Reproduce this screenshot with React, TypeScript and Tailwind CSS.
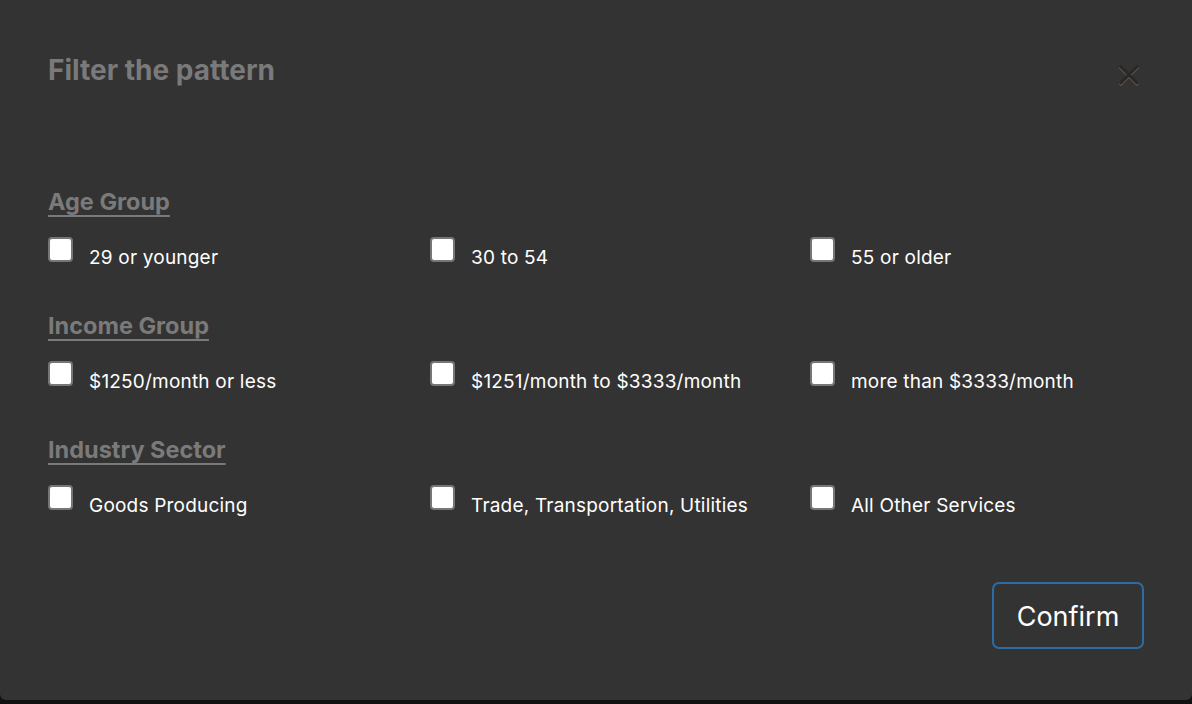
import React from "react";

const groups = [
  { title: "Age Group", items: ["29 or younger", "30 to 54", "55 or older"] },
  {
    title: "Income Group",
    items: ["$1250/month or less", "$1251/month to $3333/month", "more than $3333/month"],
  },
  {
    title: "Industry Sector",
    items: ["Goods Producing", "Trade, Transportation, Utilities", "All Other Services"],
  },
];

function Box() {
  return (
    <span className="mt-[1px] h-[25px] w-[25px] shrink-0 rounded-[4px] border-2 border-[#767676] bg-white" />
  );
}

export default function App() {
  return (
    <div
      className="flex h-[704px] w-[1192px] flex-col bg-[#111]"
      style={{ fontFamily: "Inter, 'Noto Sans', sans-serif" }}
    >
      <div className="flex h-[700px] flex-col rounded-b-[6px] bg-[#333333]">
        <div className="flex items-start justify-between pl-[48px] pr-[48px] pt-[54px]">
          <h1 className="text-[28px] font-bold leading-[32px] text-[#7a7a7a]">
            Filter the pattern
          </h1>
          <span
            className="mt-[2px] text-[36px] leading-[36px] text-[#282828]"
            style={{ textShadow: "0 1px 0 rgba(255,255,255,0.25)", fontFamily: "'DejaVu Sans', sans-serif" }}
          >
            ×
          </span>
        </div>
        <div className="flex flex-col gap-[42px] pl-[48px] pt-[96px]">
          {groups.map((g) => (
            <div key={g.title} className="flex flex-col">
              <h2 className="text-[23.5px] font-bold leading-[28px] text-[#7a7a7a] underline decoration-2 underline-offset-[5px]">
                {g.title}
              </h2>
              <div className="mt-[20px] grid grid-cols-[382px_380px_1fr]">
                {g.items.map((it) => (
                  <label key={it} className="flex items-start gap-[16px]">
                    <Box />
                    <span className="pt-[10px] text-[19px] leading-[24px] tracking-[0.2px] text-white">{it}</span>
                  </label>
                ))}
              </div>
            </div>
          ))}
        </div>
        <div className="mt-auto flex justify-end pb-[51px] pr-[48px]">
          <button className="h-[67px] w-[152px] rounded-[7px] border-2 border-[#2d6ca2] pt-[3px] text-[27px] text-white">
            Confirm
          </button>
        </div>
      </div>
    </div>
  );
}
